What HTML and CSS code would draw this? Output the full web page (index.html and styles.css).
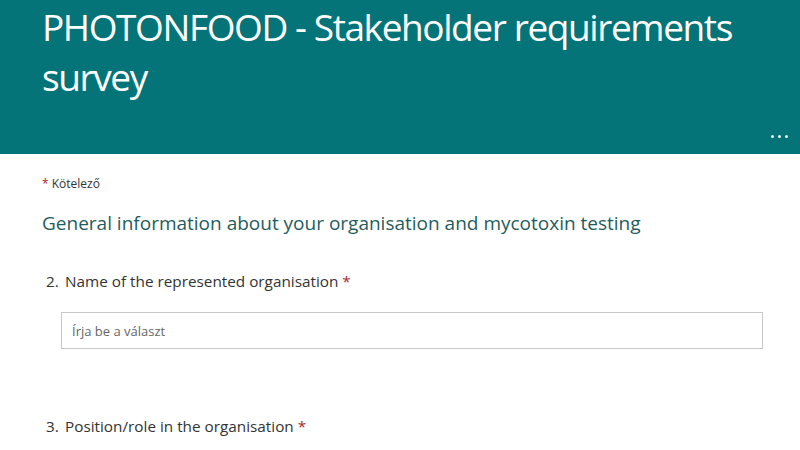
FILE: index.html
```html
<!DOCTYPE html>
<html lang="hu">
<head>
<meta charset="utf-8">
<title>PHOTONFOOD - Stakeholder requirements survey</title>
<link rel="stylesheet" href="styles.css">
</head>
<body>
<header class="banner">
  <h1 class="banner-title">PHOTONFOOD - Stakeholder requirements survey</h1>
  <div class="banner-actions"><span class="more" aria-label="További lehetőségek"><i></i><i></i><i></i></span></div>
</header>
<main class="form">
  <p class="required-note"><span class="star">*</span> Kötelező</p>
  <h2 class="section-title">General information about your organisation and mycotoxin testing</h2>
  <div class="question">
    <div class="q-label"><span class="q-num">2.</span><span class="q-text">Name of the represented organisation <span class="star">*</span></span></div>
    <input class="q-input" type="text" placeholder="Írja be a választ">
  </div>
  <div class="question q3">
    <div class="q-label"><span class="q-num">3.</span><span class="q-text">Position/role in the organisation <span class="star">*</span></span></div>
  </div>
</main>
</body>
</html>
```
FILE: styles.css
```css
html, body {
  margin: 0;
  padding: 0;
  background: #ffffff;
  font-family: "Open Sans", "Noto Sans", "Liberation Sans", sans-serif;
  overflow: hidden;
}

.banner {
  height: 154px;
  background: #047479;
  box-sizing: border-box;
  padding: 2px 12px 0 42px;
  display: flex;
  flex-direction: column;
  justify-content: space-between;
}

.banner-title {
  margin: 0;
  color: #ffffff;
  font-weight: 400;
  font-size: 37px;
  line-height: 50px;
  letter-spacing: -1.4px;
  max-width: 720px;
}

.banner-actions {
  display: flex;
  justify-content: flex-end;
  padding-bottom: 16px;
}

.more {
  display: flex;
  gap: 4px;
}

.more i {
  display: block;
  width: 3px;
  height: 3px;
  border-radius: 50%;
  background: #e8f4f4;
}

.form {
  padding: 20px 0 0 42px;
  color: #333333;
}

.star {
  color: #a4262c;
}

.required-note {
  margin: 0;
  font-size: 12px;
  line-height: 20px;
  color: #333333;
}

.section-title {
  margin: 15px 0 0;
  font-weight: 400;
  font-size: 19px;
  line-height: 28px;
  color: #1f5c60;
}

.question {
  margin-top: 33px;
}

.q-label {
  display: flex;
  font-size: 15.3px;
  line-height: 22px;
  color: #333333;
  padding-left: 4px;
}

.q-num {
  width: 19px;
}

.q-input {
  display: block;
  margin: 20px 0 0 19px;
  width: 702px;
  height: 37px;
  box-sizing: border-box;
  border: 1px solid #c8c8c8;
  border-radius: 0;
  padding: 0 10px;
  font-family: inherit;
  font-size: 13px;
  color: #333333;
  background: #ffffff;
  outline: none;
}

.q-input::placeholder {
  color: #666666;
}

.q3 {
  margin-top: 66px;
}
```
